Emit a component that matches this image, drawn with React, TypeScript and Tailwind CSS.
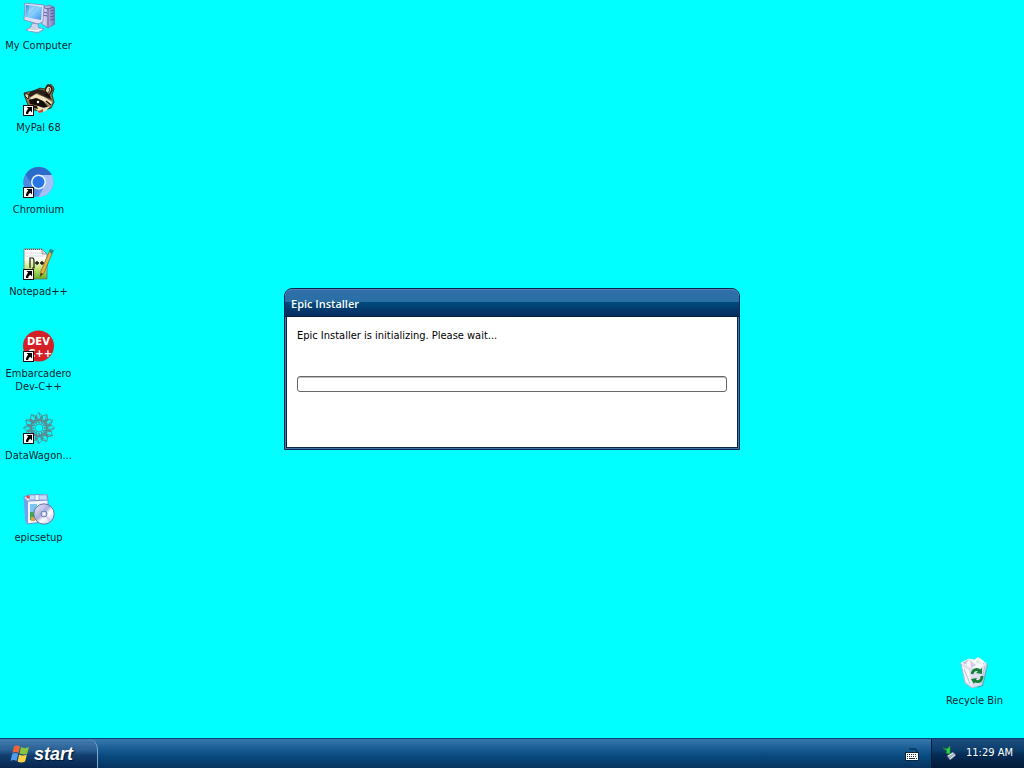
import type { ReactNode } from "react";

function ShortcutArrow() {
  return (
    <g>
      <rect x="0.5" y="21.5" width="10" height="10" fill="#fff" stroke="#111" />
      <path d="M3.500 23H9v5.500L7.300 26.800C5.800 27.800 5.200 28.800 5.200 30H3C2.800 28 3.800 26.200 5.300 24.800z" fill="#000" />
    </g>
  );
}

function ComputerIcon() {
  return (
    <svg viewBox="0 0 32 32" className="size-8" aria-hidden="true">
      <defs>
        <linearGradient id="screen" x1="0" y1="0" x2="1" y2="1">
          <stop offset="0" stopColor="#2a94ee" />
          <stop offset="0.5" stopColor="#86d0fa" />
          <stop offset="1" stopColor="#3d91ec" />
        </linearGradient>
        <linearGradient id="tower" x1="0" x2="1">
          <stop offset="0" stopColor="#e6e6fa" />
          <stop offset="1" stopColor="#7474b4" />
        </linearGradient>
      </defs>
      <path d="M19 5l8-2 5 3v16l-7 4-6-4z" fill="url(#tower)" stroke="#7277b1" strokeWidth="0.8" />
      <path d="M25 7v18M19 5l6 2 6-2" stroke="#5b63a5" fill="none" />
      <path d="M20 10l4 1M20 13l4 1M27 9l4-1M27 12l4-1M27 15l4-1M27 18l4-1" stroke="#555ba0" />
      <path d="M2 1l19 2-1 17-5 2-14-4z" fill="#dedff7" stroke="#8085ba" strokeWidth="0.8" />
      <path d="M3 3l16 2-1 13L2 15z" fill="url(#screen)" />
      <path d="M6 4l7 1-8 8z" fill="#fff" opacity="0.3" />
      <path d="M9 21l6 1 1 4 5 1-6 4-12-3 5-3z" fill="#d0d2ec" stroke="#858ab5" strokeWidth="0.8" />
      <path d="M5 28l8 1 6-2" stroke="#fff" fill="none" />
    </svg>
  );
}

function RaccoonIcon() {
  return (
    <svg viewBox="0 0 32 32" className="size-8" aria-hidden="true">
      <path d="M2 13L1 9l4-1 6-1 6-3 5 1 2-4c3-2 6 0 7 4l-2 6 2 7-3 6-10 3-7-1-6-5z" fill="#8f7c53" stroke="#241a12" strokeWidth="0.8" />
      <path d="M5 11C8 6 14 4 20 6l6 5 3 5-7-3-8-4-7 4z" fill="#292019" />
      <path d="M23 4c2-4 6-2 6 2l-3 5-4-4z" fill="#e8d8a7" stroke="#251810" strokeWidth="1.400" />
      <path d="M26 4l1 2-2 3" stroke="#4a3022" fill="none" />
      <path d="M2 9l4 2-1 4-3-3z" fill="#eedcb7" stroke="#2b1c12" />
      <path d="M7 14l6-4 8 3 8 5-1 4-6-4-8-4-5 2z" fill="#f5e5bd" />
      <path d="M6 16l7-2 7 3 5 6-6 1-7-3-5-1z" fill="#130e0b" />
      <circle cx="15" cy="18" r="1.200" fill="#fff" />
      <path d="M10 21l5 1 6 2 6-2-4 5-7 2z" fill="#ede0b9" />
      <path d="M10 21l4 1 1 3-4-1z" fill="#271410" />
      <path d="M14 26l2 1 4-2v3l-4 1z" fill="#bd4c3b" />
      <path d="M22 10l5 3M23 17l5 4" stroke="#171008" strokeWidth="1.500" />
      <ShortcutArrow />
    </svg>
  );
}

function ChromiumIcon() {
  return (
    <svg viewBox="0 0 32 32" className="size-8" aria-hidden="true">
      <circle cx="15.500" cy="16" r="15" fill="#5b91ee" />
      <path d="M15.500 16V9h13.300A15 15 0 0 1 15.500 31l6-11z" fill="#a5bff7" />
      <path d="M2.500 8.500A15 15 0 0 1 28.800 9H15.500L9 19z" fill="#2b6bc9" />
      <path d="M2.500 8.500L9.500 19l6 4-3 8A15 15 0 0 1 2.500 8.500z" fill="#4c87e0" />
      <circle cx="15.500" cy="16" r="7.500" fill="#e9f5ff" />
      <circle cx="15.500" cy="16" r="6" fill="#2576e4" />
      <ShortcutArrow />
    </svg>
  );
}

function NotepadIcon() {
  return (
    <svg viewBox="0 0 32 32" className="size-8" aria-hidden="true">
      <defs>
        <linearGradient id="paper" x1="0" y1="0" x2="0" y2="1">
          <stop offset="0.3" stopColor="#fff" />
          <stop offset="0.65" stopColor="#c5e475" />
          <stop offset="1" stopColor="#60ae27" />
        </linearGradient>
      </defs>
      <path d="M1 1h18l5 5v25H1z" fill="url(#paper)" stroke="#6c7166" strokeWidth="0.8" />
      <path d="M2 1.500h17" stroke="#555" strokeDasharray="1 1" />
      <path d="M19 1l5 5h-5z" fill="#ddd" stroke="#777" strokeWidth="0.700" />
      <path d="M2 5h16M2 8h20" stroke="#bac5c1" strokeWidth="0.600" />
      <path d="M7 20V10h3q1 1 1 3v7H9" stroke="#19200e" strokeWidth="1.200" fill="none" />
      <path d="M12 15h4M14 13v4M17 15h4M19 13v4" stroke="#111" strokeWidth="1.300" />
      <path d="M27 2l3 1-9 22-4 4 1-6z" fill="#e6b43e" stroke="#756027" strokeWidth="0.700" />
      <path d="M26 4l1-3 4 1-2 4z" fill="#228f8d" />
      <path d="M17 28l1-3 2 1z" fill="#222" />
      <ShortcutArrow />
    </svg>
  );
}

function DevIcon() {
  return (
    <svg viewBox="0 0 32 32" className="size-8" aria-hidden="true">
      <circle cx="15.500" cy="16" r="15.500" fill="#d31f25" />
      <text x="15.500" y="15" textAnchor="middle" fontFamily="DejaVu Sans, sans-serif" fontSize="10" fontWeight="700" fill="#fff">DEV</text>
      <text x="17" y="27" textAnchor="middle" fontFamily="DejaVu Sans, sans-serif" fontSize="10" fontWeight="700" fill="#fff">C++</text>
      <ShortcutArrow />
    </svg>
  );
}

const petals = [0, 30, 60, 90, 120, 150, 180, 210, 240, 270, 300, 330];

function DataWagonIcon() {
  return (
    <svg viewBox="0 0 32 32" className="size-8" aria-hidden="true">
      <g fill="none" stroke="#5f858b" strokeWidth="0.8">
        {petals.map((angle) => (
          <g key={angle} transform={`rotate(${angle} 16 16)`}>
            <path d="M16 11L12 5l4-4.500L20 5zM12 5l9 5M20 5l-9 5M16 .5l3 11" />
          </g>
        ))}
        <circle cx="16" cy="16" r="4" />
      </g>
      <ShortcutArrow />
    </svg>
  );
}

function SetupIcon() {
  return (
    <svg viewBox="0 0 32 32" className="size-8" aria-hidden="true">
      <defs>
        <linearGradient id="disc" x1="0" y1="0" x2="1" y2="1">
          <stop offset="0" stopColor="#f7f9ff" />
          <stop offset="0.450" stopColor="#aaaedd" />
          <stop offset="0.600" stopColor="#fff" />
          <stop offset="1" stopColor="#aab8e8" />
        </linearGradient>
      </defs>
      <path d="M1 3l5-2 18-1 1 6v19l-5 3-16 2z" fill="#f1f5ff" stroke="#718ed1" />
      <path d="M1 3l4 4v23l-3-3z" fill="#779feb" />
      <path d="M5 7l20-1" stroke="#7386bb" />
      <path d="M6 1l1 5h5V1zM16 1v5h8V1z" fill="#c2dbff" stroke="#7d9dd1" strokeWidth="0.700" />
      <circle cx="5" cy="3" r="1.800" fill="#d85454" />
      <path d="M7 10h7v8H7z" fill="#79c6ef" />
      <path d="M7 18h5v8H7z" fill="#41a653" />
      <path d="M8 23h4v4H8z" fill="#e1a83e" />
      <circle cx="21" cy="20" r="10.200" fill="url(#disc)" stroke="#6873a4" />
      <path d="M21 20l-5-8 4-1zM21 20l7 5-2 3z" fill="#d3c4ef" opacity="0.8" />
      <circle cx="21" cy="20" r="3" fill="#c9d6ff" stroke="#6978b1" />
      <circle cx="21" cy="20" r="1.200" fill="#fff" />
    </svg>
  );
}

function RecycleIcon() {
  return (
    <svg viewBox="0 0 32 32" className="size-8" aria-hidden="true">
      <path d="M26 6l3 2-5 21-6 2z" fill="#3c858d" opacity="0.600" />
      <path d="M2 6l7-3 18 3 1 2-5 20-10 3-7-5z" fill="#dddff0" stroke="#aeb7ce" strokeWidth="0.8" />
      <path d="M2 6l8-4 17 4-8 6z" fill="#b8bccf" stroke="#f5f7ff" />
      <path d="M7 6l4-4 4 1 4-3 6 4-2 6-5 2-9-2z" fill="#f8f8fb" />
      <path d="M11 3l6 5-5 3z" fill="#d6cce9" />
      <path d="M18 2l5 5-6-1z" fill="#dce6e4" />
      <path d="M3 9l7 4 3 16-6-4z" fill="#fff" opacity="0.75" />
      <path d="M5 12l6 15M26 9l-4 18" stroke="#b8bfd6" />
      <g fill="none" stroke="#148138" strokeWidth="2.800">
        <path d="M13 17c1-5 6-6 8-2" />
        <path d="M23 19c0 6-5 7-8 4" />
      </g>
      <path d="M17 16l6 1V11zM18 21l-6 1 3 5z" fill="#148138" />
    </svg>
  );
}

function WindowsFlag() {
  return (
    <svg viewBox="0 0 20 20" className="size-5" aria-hidden="true">
      <path d="M4 2.500q3-2 6 0L8.500 9q-3-2-6 0z" fill="#f26532" />
      <path d="M11 3q3 2 8 0L17.200 10q-4 1-7.700-.5z" fill="#87c440" />
      <path d="M2.200 10q3-2 6 0l-1.700 7q-3-2-6 0z" fill="#4d9cec" />
      <path d="M9.200 10.500q3 2 7.700 0l-1.800 7q-4 2-7.600 0z" fill="#fbd043" />
    </svg>
  );
}

function DesktopItem({ label, children }: { label: string; children: ReactNode }) {
  return (
    <button type="button" className="flex w-[75px] flex-col items-center gap-[5px] text-center leading-[13px] text-[#062630]">
      {children}
      <span>{label}</span>
    </button>
  );
}

function InstallerWindow() {
  return (
    <section
      role="dialog"
      aria-labelledby="installer-title"
      className="flex h-[162px] w-[456px] flex-col rounded-t-lg border border-[#06264b] bg-[#3d79ae] px-px pb-px"
    >
      <header className="-mx-px flex h-7 shrink-0 items-center rounded-t-[7px] border-b border-[#04203f] bg-[linear-gradient(#346fac,#286fa3_48%,#004b7d_50%,#082b5e)] px-1.5 shadow-[inset_0_1px_0_#4d83b5]">
        <h1 id="installer-title" className="pt-1 font-['Open_Sans',sans-serif] text-[11px] font-semibold text-white">
          Epic Installer
        </h1>
      </header>
      <div className="flex grow flex-col gap-8 border border-t-0 border-[#06264b] bg-white px-2.5 pt-[11px] text-black">
        <label htmlFor="install-progress" className="leading-4">
          Epic Installer is initializing. Please wait...
        </label>
        <div className="h-4 rounded-[3px] border border-[#686868] shadow-[inset_0_1px_0_#bebebe]">
          <progress id="install-progress" value={0} max={100} className="block h-full w-full appearance-none opacity-0" />
        </div>
      </div>
    </section>
  );
}

function Taskbar() {
  return (
    <footer className="flex h-[30px] shrink-0 border-t border-[#073f70] bg-[linear-gradient(#3878ae,#175c93_35%,#08497f_60%,#07335f)] text-white">
      <button
        type="button"
        className="flex w-[98px] items-center gap-1 rounded-tr-[10px] border-r border-[#7fa9ca] bg-[linear-gradient(#447db0,#285e91_40%,#123f71_55%,#08264f)] pl-2.5 font-['Liberation_Sans',sans-serif] text-lg leading-6 font-bold italic"
      >
        <WindowsFlag />
        <span className="[text-shadow:1px_1px_1px_#001a36]">start</span>
      </button>
      <div className="ml-auto flex items-center pr-3">
        <svg viewBox="0 0 14 14" className="size-3.5" aria-label="Keyboard">
          <path d="M4 1q1 2 4 1t4 2v2" fill="none" stroke="#081b2c" />
          <rect x="0.500" y="5.500" width="13" height="8" fill="#fff" stroke="#10263b" />
          <path d="M2 7.500h10M2 9.500h10" stroke="#182c3c" strokeDasharray="1 1" />
          <path d="M2 11.500h1M4 11.500h6M11 11.500h1" stroke="#182c3c" />
        </svg>
      </div>
      <div className="flex w-[93px] items-center gap-2 border-l border-[#001e3d] bg-[linear-gradient(#1c4f80,#0c3c6a_40%,#042b54_55%,#031a38)] pl-2.5">
        <svg viewBox="0 0 16 16" className="size-4" aria-label="Safely remove hardware">
          <path d="M5 10l6-4 3 3-6 5z" fill="#9eb1bc" stroke="#50677b" />
          <path d="M6 10l5-3M8 13l5-4" stroke="#eef6fa" />
          <path d="M1 2l4 1 3-3v8l-4-1 1-2z" fill="#33d64a" stroke="#168c31" strokeWidth="0.700" />
        </svg>
        <time>11:29 AM</time>
      </div>
    </footer>
  );
}

export default function App() {
  return (
    <div className="flex h-screen flex-col bg-[#00ffff] font-['DejaVu_Sans_Condensed','Roboto',sans-serif] text-[11px]">
      <main className="grid min-h-0 grow grid-cols-[1fr_auto_1fr]">
        <nav aria-label="Desktop shortcuts" className="grid auto-rows-[82px] content-start items-start pt-0.5 pl-px">
          <DesktopItem label="My Computer"><ComputerIcon /></DesktopItem>
          <DesktopItem label="MyPal 68"><RaccoonIcon /></DesktopItem>
          <DesktopItem label="Chromium"><ChromiumIcon /></DesktopItem>
          <DesktopItem label="Notepad++"><NotepadIcon /></DesktopItem>
          <DesktopItem label="Embarcadero Dev-C++"><DevIcon /></DesktopItem>
          <DesktopItem label="DataWagon..."><DataWagonIcon /></DesktopItem>
          <DesktopItem label="epicsetup"><SetupIcon /></DesktopItem>
        </nav>
        <div className="flex items-center">
          <InstallerWindow />
        </div>
        <div className="flex items-end justify-end pr-3 pb-[31px]">
          <DesktopItem label="Recycle Bin"><RecycleIcon /></DesktopItem>
        </div>
      </main>
      <Taskbar />
    </div>
  );
}
